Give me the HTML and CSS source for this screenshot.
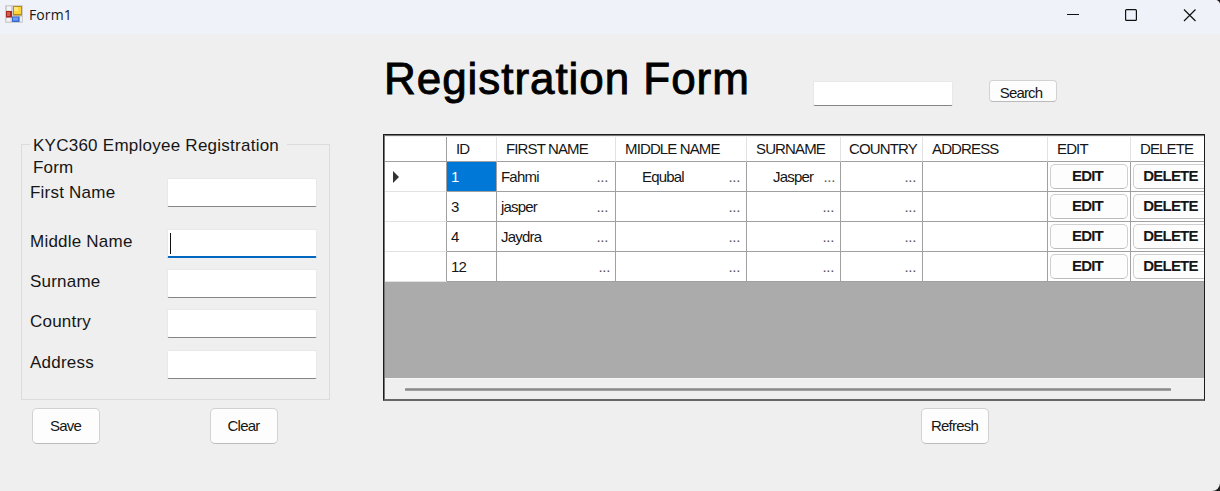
FILE: index.html
```html
<!DOCTYPE html>
<html lang="en">
<head>
<meta charset="utf-8">
<title>Form1</title>
<link rel="stylesheet" href="styles.css">
</head>
<body>
<div class="window">
  <header class="titlebar">
    <svg class="app-icon" width="18" height="18" viewBox="0 0 18 18">
      <rect width="18" height="18" rx="1" fill="#cfcfd1"/>
      <rect x="2" y="1.5" width="4" height="4" fill="#f4f4f5"/>
      <rect x="1.5" y="13" width="4" height="3.5" fill="#f4f4f5"/>
      <rect x="15" y="12" width="2" height="4.500" fill="#eeeeef"/>
      <rect x="8" y="1" width="9" height="9.500" fill="#b88a17"/>
      <rect x="9" y="2" width="7" height="7" fill="#ffd435"/>
      <rect x="9" y="2" width="4" height="4" fill="#ffe680"/>
      <rect x="1" y="6" width="6" height="6.500" fill="#a52823"/>
      <rect x="2" y="7" width="3" height="4" fill="#dc5a4c"/>
      <rect x="7" y="11.500" width="7.500" height="5.500" fill="#376bd0"/>
      <rect x="8" y="12.500" width="5" height="3" fill="#6f9df3"/>
    </svg>
    <span class="caption">Form1</span>
    <svg class="controls" width="132" height="14" viewBox="0 0 132 14" fill="none" stroke="#111" stroke-width="1.200">
      <path d="M0 6.500H12"/>
      <rect x="58.600" y="1.600" width="10.800" height="10.800" rx="1"/>
      <path d="M117 1.500L128.500 13M128.500 1.500L117 13"/>
    </svg>
  </header>
  <main class="client">
    <section class="left">
      <fieldset class="group">
        <legend><span class="l1">KYC360 Employee Registration</span></legend>
        <div class="l2">Form</div>
        <div class="field f1"><label>First Name</label><div class="box"></div></div>
        <div class="field f2"><label>Middle Name</label><div class="box focus"><i class="caret"></i></div></div>
        <div class="field f3"><label>Surname</label><div class="box"></div></div>
        <div class="field f4"><label>Country</label><div class="box"></div></div>
        <div class="field f5"><label>Address</label><div class="box"></div></div>
      </fieldset>
      <div class="actions"><button class="btn">Save</button><button class="btn">Clear</button></div>
    </section>
    <section class="right">
      <div class="top">
        <h1>Registration Form</h1>
        <div class="box search"></div>
        <button class="btn small">Search</button>
      </div>
      <div class="grid">
        <div class="row head">
          <div></div><div>ID</div><div>FIRST NAME</div><div>MIDDLE NAME</div><div>SURNAME</div><div class="country">COUNTRY</div><div>ADDRESS</div><div>EDIT</div><div>DELETE</div>
        </div>
        <div class="row">
          <div><i class="arrow"></i></div><div class="selected">1</div><div>Fahmi<b>...</b></div><div class="equbal">Equbal<b>...</b></div><div class="jasper">Jasper<b>...</b></div><div><b>...</b></div><div></div><div class="act"><span>EDIT</span></div><div class="act del"><span>DELETE</span></div>
        </div>
        <div class="row">
          <div></div><div>3</div><div>jasper<b>...</b></div><div><b>...</b></div><div><b>...</b></div><div><b>...</b></div><div></div><div class="act"><span>EDIT</span></div><div class="act del"><span>DELETE</span></div>
        </div>
        <div class="row">
          <div></div><div>4</div><div>Jaydra<b>...</b></div><div><b>...</b></div><div><b>...</b></div><div><b>...</b></div><div></div><div class="act"><span>EDIT</span></div><div class="act del"><span>DELETE</span></div>
        </div>
        <div class="row">
          <div></div><div>12</div><div class="last"><b>...</b></div><div><b>...</b></div><div><b>...</b></div><div><b>...</b></div><div></div><div class="act"><span>EDIT</span></div><div class="act del"><span>DELETE</span></div>
        </div>
        <div class="empty"></div>
        <div class="scroll"><div class="thumb"></div></div>
      </div>
      <button class="btn refresh">Refresh</button>
    </section>
  </main>
</div>
</body>
</html>
```
FILE: styles.css
```css
* { box-sizing: border-box; }
body { margin: 0; background: #1c1c1c; font-family: "Liberation Sans", Arial, sans-serif; color: #161616; }
.window { width: 1220px; height: 491px; background: #efefef; border-radius: 0 5px 8px 0; overflow: hidden; }
.titlebar { height: 34px; background: #eff3f9; display: flex; align-items: flex-start; padding: 5px 21px 0 5px; }
.caption { font: 14px/20px "Open Sans", sans-serif; margin-left: 6px; letter-spacing: .1px; }
.controls { margin: 3px 0 0 auto; }
.client { display: flex; height: 457px; }

.left { width: 383px; padding: 110px 0 0 21px; }
.group { position: relative; width: 309px; height: 256px; margin: 0; padding: 0 12px 0 8px; border: 1px solid #dcdcdc; border-width: 0 1px 1px; font-size: 17px; }
.group::before, .group::after { content: ""; position: absolute; top: 0; height: 1px; background: #dcdcdc; }
.group::before { left: 0; width: 8px; }
.group::after { right: 0; width: 42px; }
.group legend { float: left; width: 260px; padding: 0 0 0 3px; height: 11px; line-height: 20px; margin-top: -8px; white-space: nowrap; }
.l1 { letter-spacing: .25px; }
.l2 { clear: both; padding: 11px 0 0 3px; line-height: 20px; height: 31px; letter-spacing: .2px; }
.field { display: flex; justify-content: space-between; align-items: flex-start; height: 29px; line-height: 20px; letter-spacing: .22px; }
.field label { padding-top: 3px; }
.f1 label { padding-top: 5px; }
.f2 { margin-top: 22px; }
.f3 { margin-top: 11px; }
.f4 { margin-top: 11px; }
.f5 { margin-top: 12px; }
.box { width: 150px; height: 29px; background: #fff; border: 1px solid #e8e8e8; border-bottom-color: #858585; border-radius: 2px; }
.focus { border-bottom: 2px solid #0067c0; }
.caret { display: block; width: 1px; height: 21px; margin: 3px 0 0 2px; background: #111; }
.actions { display: flex; gap: 110px; padding: 8px 0 0 11px; }
.btn { font: 15px/18px "Liberation Sans", Arial, sans-serif; letter-spacing: -.8px; width: 68px; height: 36px; padding: 0 1px 0 0; background: #fdfdfd; color: #161616; border: 1px solid #d2d2d2; border-bottom-color: #bbb; border-radius: 5px; }

.right { width: 822px; }
.top { height: 100px; display: flex; align-items: flex-start; }
h1 { margin: 18px 0 0; width: 430px; padding-left: 1px; font-size: 44px; line-height: 54px; font-weight: 400; letter-spacing: .95px; color: #000; -webkit-text-stroke: .9px #000; white-space: nowrap; }
.search { width: 140px; height: 25px; margin-top: 47px; }
.small { height: 22px; margin: 46px 0 0 36px; border-radius: 4px; padding: 3px 4px 0 0; letter-spacing: -.85px; }

.grid { height: 267px; border: 1px solid #1c1c1c; border-bottom: 2px solid #666; box-shadow: inset 1px 1px #777; padding: 2px 0 0 1px; overflow: hidden; }
.row { display: grid; grid-template-columns: 62px 50px 119px 131px 94px 82px 125px 83px 73px; height: 30px; font-size: 15px; line-height: 30px; letter-spacing: -.8px; }
.row > div { display: flex; white-space: nowrap; background: #fff; border-right: 1px solid #a0a0a0; border-bottom: 1px solid #a0a0a0; padding-left: 4px; overflow: hidden; }
.row > div:first-child { border-bottom-color: #e2e2e2; }
.row > div:last-child { border-right: 0; }
.row b { margin: 0 6px 0 auto; font-weight: 400; color: #555; letter-spacing: -.3px; }
.row > div:nth-child(3) b { margin-right: 7px; }
.row > .last:nth-child(3) b { margin-right: 5px; }
.head { height: 25px; line-height: 24px; letter-spacing: -.87px; }
.head > div { border-right-color: #e2e2e2; padding-left: 9px; }
.head > div:first-child { border-right-color: #a0a0a0; border-bottom-color: #a0a0a0; }
.row .country { padding-left: 8px; }
.row .selected { background: #0078d7; color: #fff; }
.row .equbal { padding-left: 26px; }
.row .jasper { padding-left: 26px; }
.row .jasper b { margin-right: 5px; }
.arrow { width: 0; height: 0; margin: 9px 0 0 4px; border: 6px solid transparent; border-left-color: #333; border-right: 0; }
.row .act { padding: 2px; }
.act span { flex: none; width: 78px; height: 25px; border: 1px solid #cfcfcf; border-bottom-color: #bbb; border-radius: 5px; background: #fdfdfd; text-align: center; font-weight: 700; line-height: 22px; padding-right: 3px; }
.del span { width: 82px; padding-right: 7px; }
.empty { height: 96px; background: #ababab; }
.scroll { height: 22px; padding: 9px 33px 0 20px; border-top: 1px solid #f6f6f6; background: #efefef; }
.thumb { height: 3px; background: #8a8a8a; border: 1px solid #a0a0a0; border-width: 1px 0; border-radius: 1px; }
.refresh { display: block; margin: 7px 0 0 538px; }
```
